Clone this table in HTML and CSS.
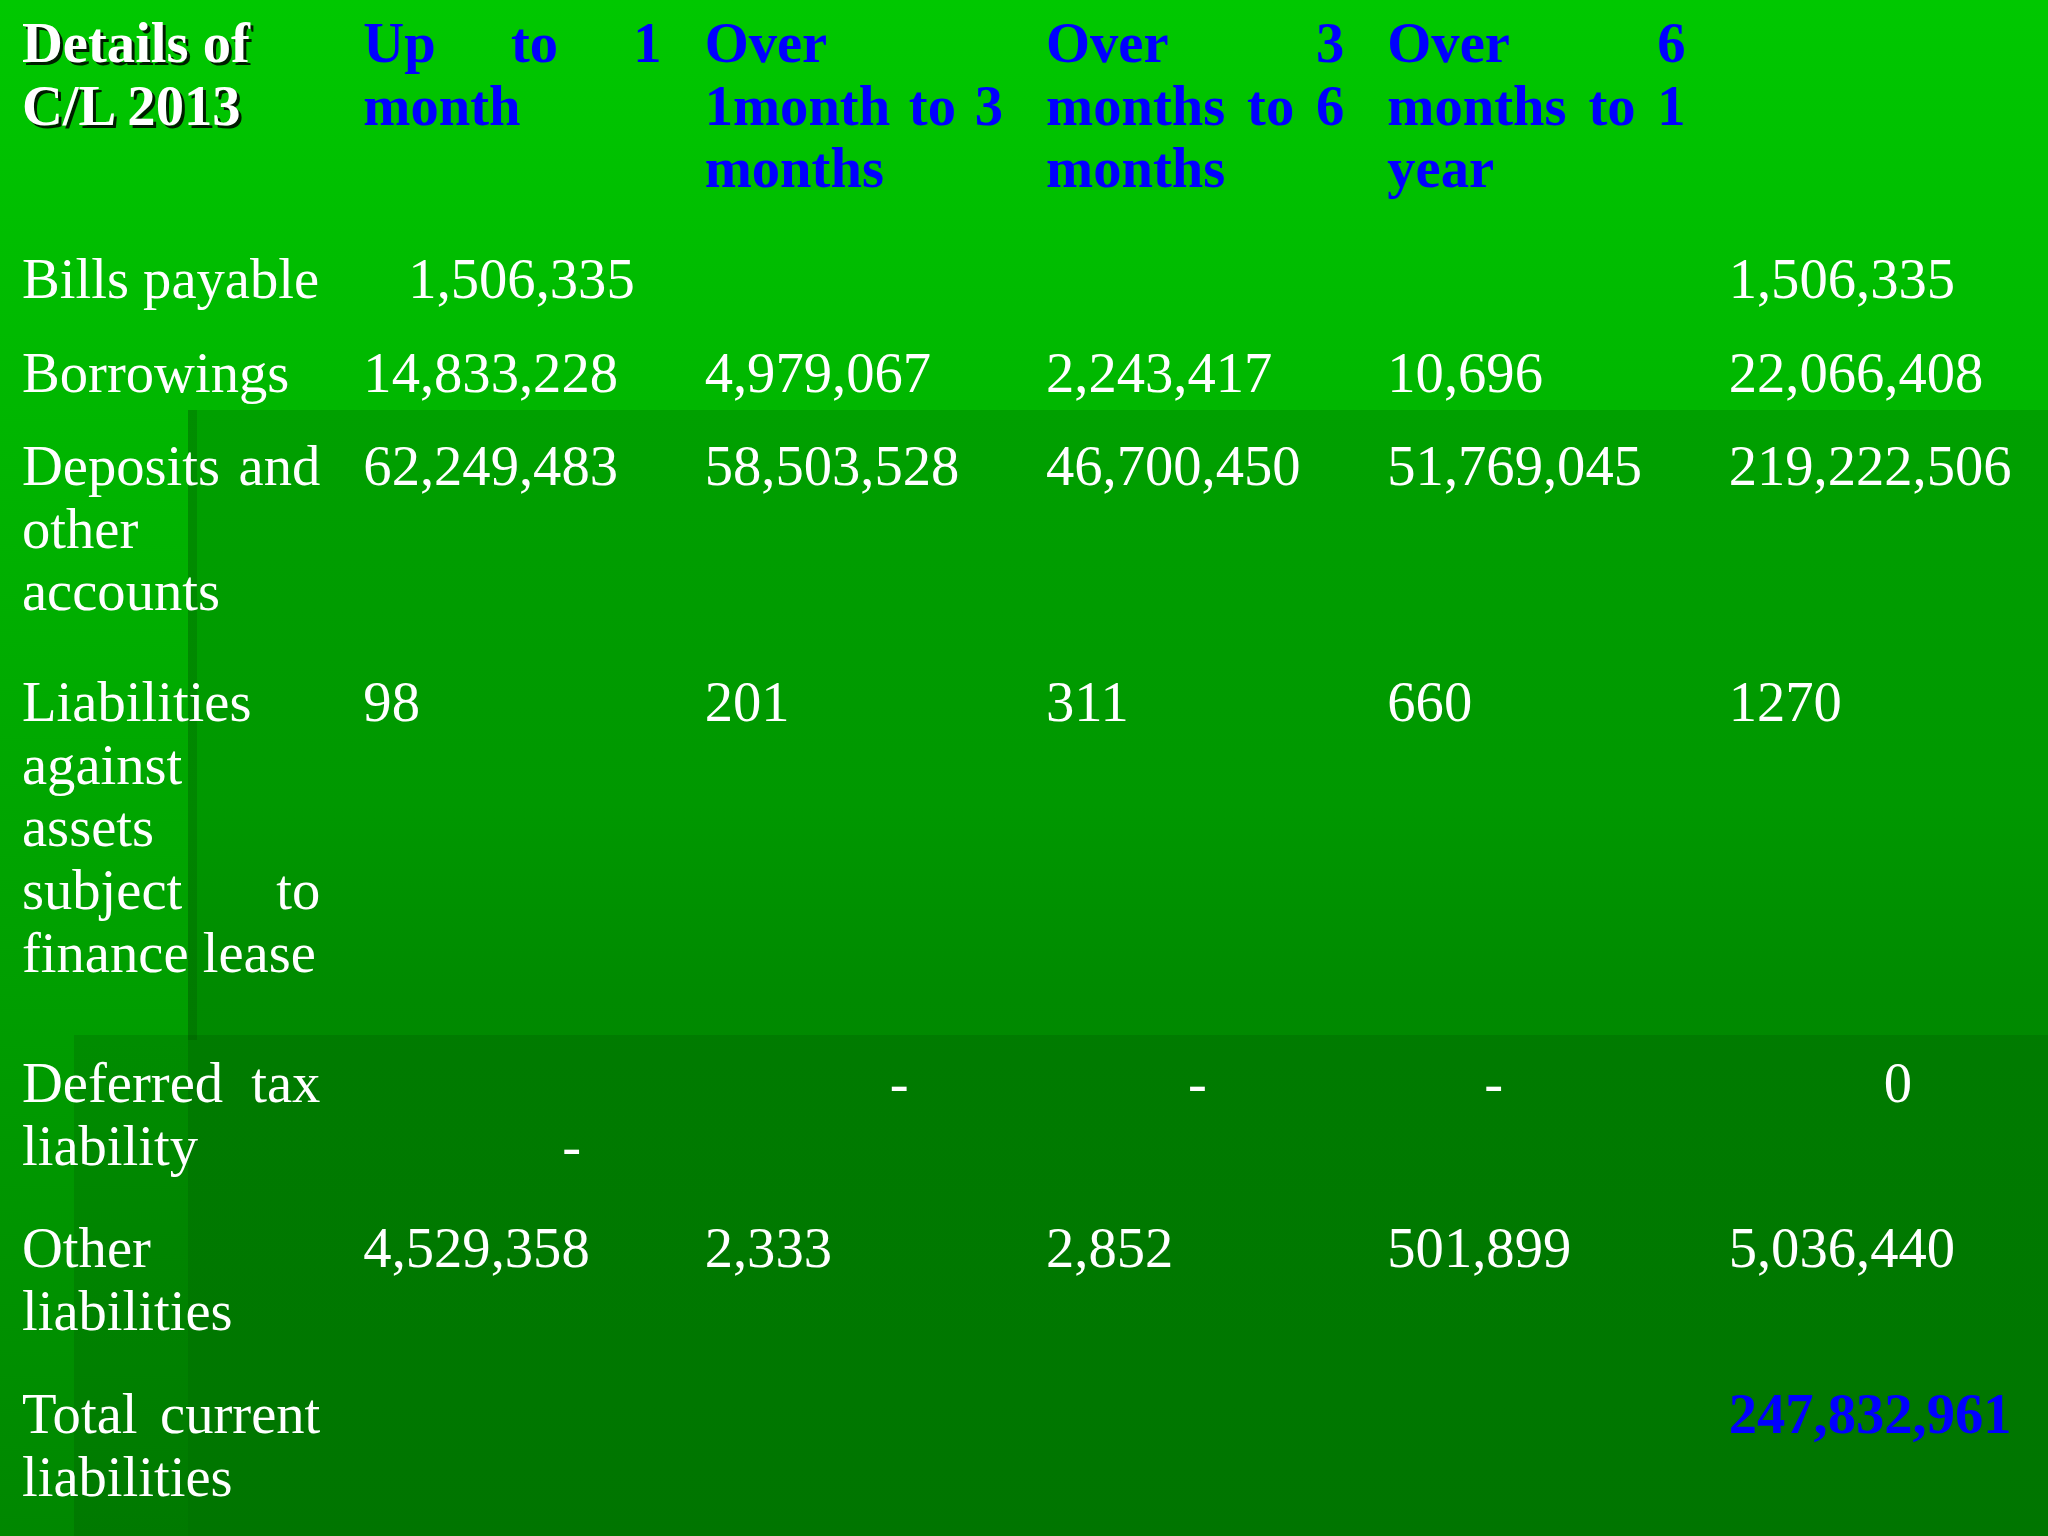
FILE: index.html
```html
<!DOCTYPE html>
<html lang="en">
<head>
<meta charset="utf-8">
<title>Details of C/L 2013</title>
<link rel="stylesheet" href="styles.css">
</head>
<body>
<div class="slide">
  <div class="grid">
    <div class="cell head-main">Details of C/L 2013</div>
    <div class="cell head">Up to 1 month</div>
    <div class="cell head">Over 1month to 3 months</div>
    <div class="cell head">Over 3 months to 6 months</div>
    <div class="cell head">Over 6 months to 1 year</div>
    <div class="cell head"></div>

    <div class="cell label">Bills payable</div>
    <div class="cell"><span class="off-45">1,506,335</span></div>
    <div class="cell"></div>
    <div class="cell"></div>
    <div class="cell"></div>
    <div class="cell">1,506,335</div>

    <div class="cell label">Borrowings</div>
    <div class="cell">14,833,228</div>
    <div class="cell">4,979,067</div>
    <div class="cell">2,243,417</div>
    <div class="cell">10,696</div>
    <div class="cell">22,066,408</div>

    <div class="cell label">Deposits and other accounts</div>
    <div class="cell">62,249,483</div>
    <div class="cell">58,503,528</div>
    <div class="cell">46,700,450</div>
    <div class="cell">51,769,045</div>
    <div class="cell">219,222,506</div>

    <div class="cell label">Liabilities against assets subject to finance lease</div>
    <div class="cell">98</div>
    <div class="cell">201</div>
    <div class="cell">311</div>
    <div class="cell">660</div>
    <div class="cell">1270</div>

    <div class="cell label">Deferred tax liability</div>
    <div class="cell"><span class="blank-line"></span><span class="off-199">-</span></div>
    <div class="cell"><span class="off-185">-</span></div>
    <div class="cell"><span class="off-142">-</span></div>
    <div class="cell"><span class="off-97">-</span></div>
    <div class="cell"><span class="off-155">0</span></div>

    <div class="cell label">Other liabilities</div>
    <div class="cell">4,529,358</div>
    <div class="cell">2,333</div>
    <div class="cell">2,852</div>
    <div class="cell">501,899</div>
    <div class="cell">5,036,440</div>

    <div class="cell label">Total current liabilities</div>
    <div class="cell"></div>
    <div class="cell"></div>
    <div class="cell"></div>
    <div class="cell"></div>
    <div class="cell total">247,832,961</div>
  </div>
</div>
</body>
</html>
```

FILE: styles.css
```css
html, body {
  margin: 0;
  padding: 0;
}

body {
  width: 2048px;
  height: 1536px;
  overflow: hidden;
  font-family: "Liberation Serif", "Times New Roman", serif;
}

.slide {
  width: 2048px;
  height: 1536px;
  background:
    linear-gradient(rgba(0, 0, 0, 0.1), rgba(0, 0, 0, 0.1)) 74px 1035px / 1974px 501px no-repeat,
    linear-gradient(rgba(0, 30, 0, 0.14), rgba(0, 30, 0, 0.14)) 188px 410px / 9px 630px no-repeat,
    linear-gradient(#00a000, #009800 35%, #008a00 52%, #008200) 188px 410px / 1860px 1126px no-repeat,
    linear-gradient(#00c800, #008700);
}

.grid {
  display: grid;
  grid-template-columns: repeat(6, 341.333px);
  grid-template-rows: 236px 94px 93px 236px 381px 165px 166px 165px;
}

.cell {
  padding: 12px 21px 0 22px;
  font-size: 56.6px;
  line-height: 62.7px;
  color: #ffffff;
  text-align: justify;
}

.head-main {
  font-weight: bold;
  text-align: left;
  text-shadow: 3px 3px 0 rgba(0, 0, 0, 0.85);
}

.head {
  font-weight: bold;
  color: #0000ff;
}

.total {
  font-weight: bold;
  color: #0000ff;
  text-align: left;
}

.blank-line {
  display: block;
  height: 62.7px;
}

.off-45 { padding-left: 45px; }
.off-199 { padding-left: 199px; }
.off-185 { padding-left: 185px; }
.off-142 { padding-left: 142px; }
.off-97 { padding-left: 97px; }
.off-155 { padding-left: 155px; }
```
